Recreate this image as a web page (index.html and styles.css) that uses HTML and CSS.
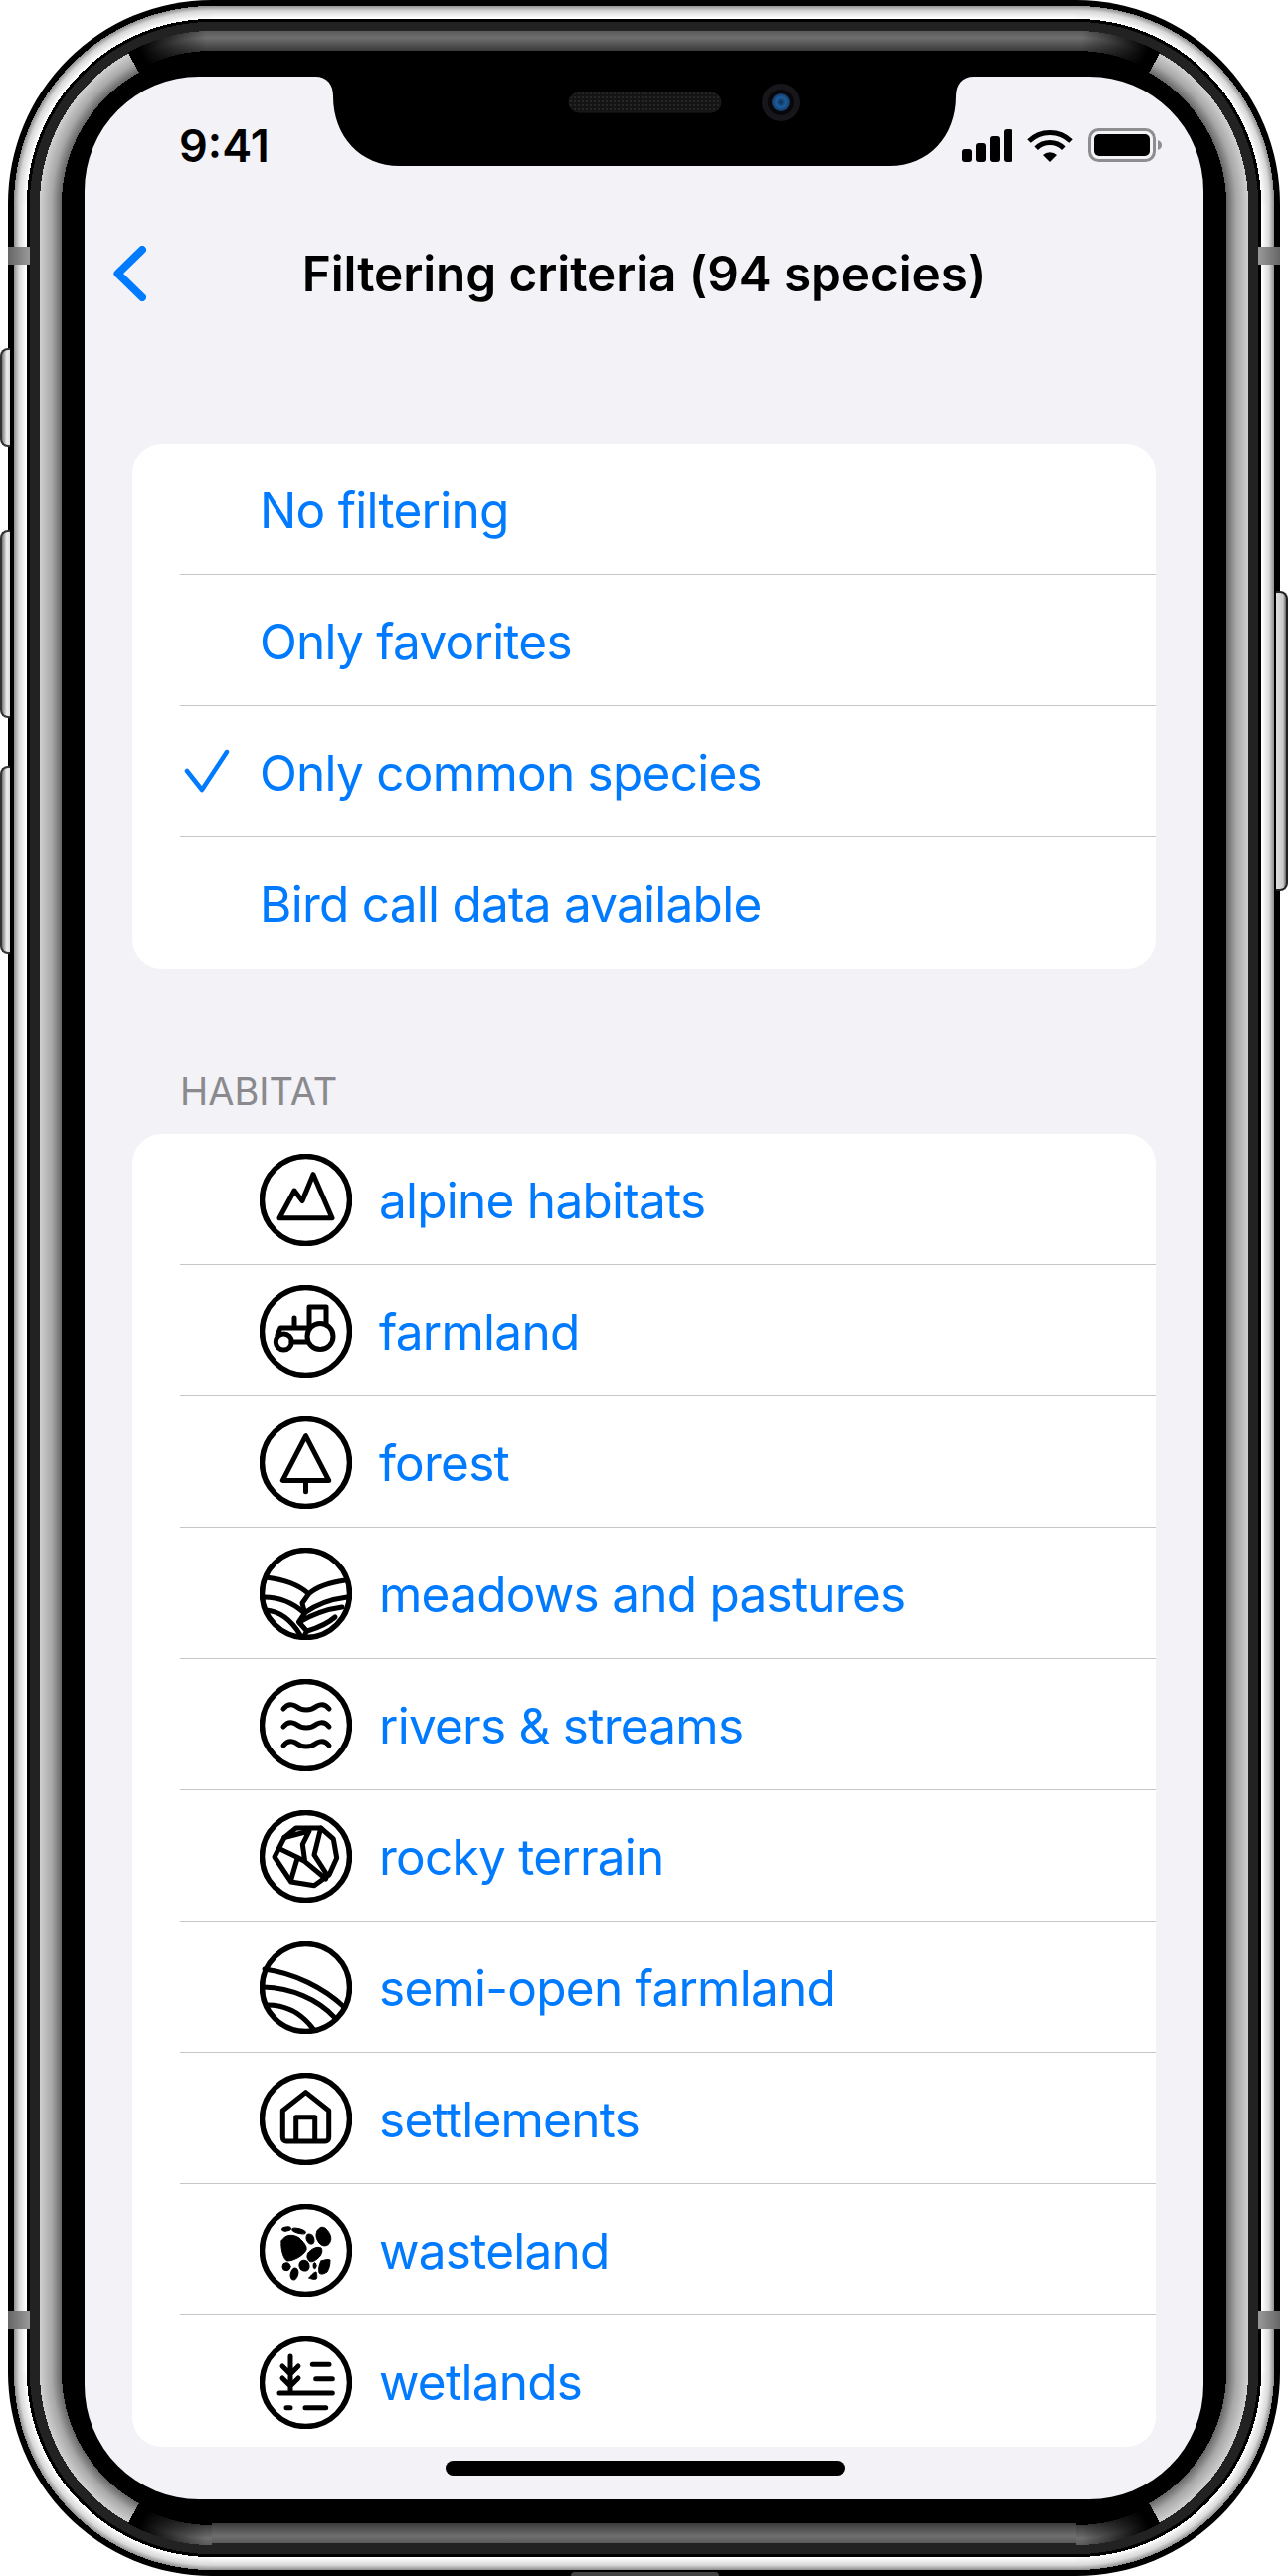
FILE: index.html
```html
<!DOCTYPE html>
<html lang="en">
<head>
    <meta charset="UTF-8">
    <title>Filtering criteria</title>
    <link rel="stylesheet" href="styles.css">
</head>
<body>
    <div class="device">
        <span class="side-btn silent"></span>
        <span class="side-btn vol-up"></span>
        <span class="side-btn vol-down"></span>
        <span class="side-btn power"></span>
        <span class="bottom-btn"></span>

        <div class="phone">
            <div class="screen">
                <svg class="notch" width="662" height="90" viewBox="0 0 662 90">
                    <defs>
                        <pattern id="mesh" width="4" height="4" patternUnits="userSpaceOnUse">
                            <rect width="4" height="4" fill="#141414"/>
                            <rect width="2" height="2" fill="#262626"/>
                        </pattern>
                        <radialGradient id="lens">
                            <stop offset="0" stop-color="#0d2c52"/>
                            <stop offset="0.55" stop-color="#1d5d9b"/>
                            <stop offset="1" stop-color="#123a66"/>
                        </radialGradient>
                    </defs>
                    <path d="M0 0C12 0 18 8 18 20C18 60 45 90 85 90H577C617 90 644 60 644 20C644 8 650 0 662 0Z" fill="#000"/>
                    <rect x="255" y="16" width="153" height="20" rx="10" fill="url(#mesh)" stroke="#1c1c1c"/>
                    <circle cx="468" cy="26" r="19" fill="#17171b"/>
                    <circle cx="468" cy="26" r="13" fill="#08080c"/>
                    <circle cx="468" cy="26" r="9" fill="url(#lens)"/>
                </svg>

                <div class="status">
                    <span class="time">9:41</span>
                    <div class="status-icons">
                        <svg width="51" height="33" viewBox="0 0 51 33" fill="#000">
                            <rect x="0" y="20" width="10" height="13" rx="3"/>
                            <rect x="14" y="14" width="10" height="19" rx="3"/>
                            <rect x="28" y="7" width="10" height="26" rx="3"/>
                            <rect x="42" y="0" width="9" height="33" rx="3"/>
                        </svg>
                        <svg width="46" height="33" viewBox="0 0 46 33">
                            <path d="M2 12A30 30 0 0 1 44 12M9.200 19.200A19.500 19.500 0 0 1 36.800 19.200" fill="none" stroke="#000" stroke-width="5"/>
                            <path d="M23 33L16 26A10 10 0 0 1 30 26Z" fill="#000"/>
                        </svg>
                        <svg width="74" height="34" viewBox="0 0 74 34">
                            <rect x="1.500" y="1.500" width="65" height="31" rx="9" fill="none" stroke="#8e8e90" stroke-width="3"/>
                            <rect x="6" y="6" width="56" height="22" rx="5" fill="#000"/>
                            <path d="M70 12C73 13 74 15 74 17C74 19 73 21 70 22Z" fill="#8e8e90"/>
                        </svg>
                    </div>
                </div>

                <div class="nav">
                    <svg class="back" width="33" height="56" viewBox="0 0 33 56">
                        <path d="M29 4L4.500 28L29 52" fill="none" stroke="#007aff" stroke-width="8" stroke-linecap="round" stroke-linejoin="round"/>
                    </svg>
                    <h1>Filtering criteria (94 species)</h1>
                </div>

                <ul class="card first">
                    <li class="row"><span class="slot"></span>No filtering</li>
                    <li class="row"><span class="slot"></span>Only favorites</li>
                    <li class="row">
                        <span class="slot">
                            <svg class="check" width="47" height="47" viewBox="0 0 47 47">
                                <path d="M3 22L18 41L43 3" fill="none" stroke="#007aff" stroke-width="4.500" stroke-linecap="round" stroke-linejoin="round"/>
                            </svg>
                        </span>
                        Only common species
                    </li>
                    <li class="row"><span class="slot"></span>Bird call data available</li>
                </ul>

                <h2 class="section-label">HABITAT</h2>

                <ul class="card">
                    <li class="row">
                        <svg class="habitat" viewBox="0 0 93 93">
                            <circle class="ring" cx="46.500" cy="46.500" r="44"/>
                            <path d="M20 64.700L35 37L43 47.500L54 20.700L73 64.700Z"/>
                        </svg>
                        alpine habitats
                    </li>
                    <li class="row">
                        <svg class="habitat" viewBox="0 0 93 93">
                            <circle class="ring" cx="46.500" cy="46.500" r="44"/>
                            <path d="M50 40V22H67V40"/>
                            <circle cx="61" cy="51.500" r="13"/>
                            <circle cx="24.300" cy="57" r="8"/>
                            <path d="M18 50L21 43H50M35 33V43M32 57H48"/>
                        </svg>
                        farmland
                    </li>
                    <li class="row">
                        <svg class="habitat" viewBox="0 0 93 93">
                            <circle class="ring" cx="46.500" cy="46.500" r="44"/>
                            <path d="M46.500 19.600L23.300 64.400H69.700ZM46.500 64.400V75.800"/>
                        </svg>
                        forest
                    </li>
                    <li class="row">
                        <svg class="habitat" viewBox="0 0 93 93">
                            <circle class="ring" cx="46.500" cy="46.500" r="44"/>
                            <path d="M6 30C24 32 40 38 49.500 46.700C58 39 72 35 86 33"/>
                            <path d="M4.500 50C20 50 34 56 45 66C56 58 72 52 88 50"/>
                            <path d="M6 63C20 64 32 73 41 88"/>
                            <path d="M40 75C52 68 68 62 83 60"/>
                            <path d="M48 84C58 81 68 77 76 70"/>
                            <path d="M49.500 46.700L43 56L45.500 66L39.500 75L47.500 84L44 91"/>
                        </svg>
                        meadows and pastures
                    </li>
                    <li class="row">
                        <svg class="habitat" viewBox="0 0 93 93">
                            <circle class="ring" cx="46.500" cy="46.500" r="44"/>
                            <path d="M24 30C28 25 32 25 36 27C40 30 43 31 47 31C51 31 54 30 58 27C62 25 66 25 70 30"/>
                            <path d="M24 48C28 43 32 43 36 45C40 48 43 49 47 49C51 49 54 48 58 45C62 43 66 43 70 48"/>
                            <path d="M24 67C28 62 32 62 36 64C40 67 43 68 47 68C51 68 54 67 58 64C62 62 66 62 70 67"/>
                        </svg>
                        rivers &amp; streams
                    </li>
                    <li class="row">
                        <svg class="habitat" viewBox="0 0 93 93">
                            <circle class="ring" cx="46.500" cy="46.500" r="44"/>
                            <path d="M15 47L25 27.500L36.700 18H61.700L74.300 29L77.700 48L70 65L55 75.700L31.700 72Z"/>
                            <path d="M25 27.500L50 21L43.300 34.400L45.700 51.600L66.700 69M61.700 18L55 44.800L68 65M21.700 39.600L38.300 47.500L31.700 70M38.300 47.500L45.700 51.600"/>
                        </svg>
                        rocky terrain
                    </li>
                    <li class="row">
                        <svg class="habitat" viewBox="0 0 93 93">
                            <circle class="ring" cx="46.500" cy="46.500" r="44"/>
                            <path d="M5 28C35 32 65 47 85 66M4 46C32 47 58 58 75 76M8 64C26 64 42 72 54 88"/>
                        </svg>
                        semi-open farmland
                    </li>
                    <li class="row">
                        <svg class="habitat" viewBox="0 0 93 93">
                            <circle class="ring" cx="46.500" cy="46.500" r="44"/>
                            <path d="M46.500 19.600L23.300 38V65C23.300 67.500 25 69 27 69H66C68 69 69.700 67.500 69.700 65V38ZM36.700 69V44.800H55.700V69"/>
                        </svg>
                        settlements
                    </li>
                    <li class="row">
                        <svg class="habitat" viewBox="0 0 93 93">
                            <circle class="ring" cx="46.500" cy="46.500" r="44"/>
                            <g class="solid">
                                <path d="M22 37C26 30 34 30 40 34C44 38 48 42 47 46C44 52 34 57 28 57C24 56 21 44 22 37Z"/>
                                <path d="M58 27C60 23 64 22 67 25C71 29 73 34 71 38C69 43 63 43 60 39C57 35 56 31 58 27Z"/>
                                <path d="M49 49C52 45 58 42 62 44C64 47 62 52 59 54C56 57 52 59 50 57C48 55 47 52 49 49Z"/>
                                <path d="M62 57C65 56 69 55 71 56C71 61 70 65 68 68C65 70 62 71 60 69C59 65 60 60 62 57Z"/>
                                <path d="M50 74C52 71 55 68 57 68C58 71 58 75 57 75C55 76 52 75 50 74Z"/>
                                <ellipse cx="45" cy="61.700" rx="5" ry="5.500" transform="rotate(-30 45 61.700)"/>
                                <circle cx="27" cy="62.700" r="4"/>
                                <ellipse cx="35" cy="70" rx="3.700" ry="6" transform="rotate(15 35 70)"/>
                                <ellipse cx="55.500" cy="61.700" rx="1.500" ry="3"/>
                                <ellipse cx="27" cy="25" rx="4.500" ry="2" transform="rotate(-10 27 25)"/>
                                <ellipse cx="39.500" cy="27" rx="7" ry="2.300" transform="rotate(15 39.500 27)"/>
                                <ellipse cx="51" cy="35" rx="3.700" ry="5.300" transform="rotate(-25 51 35)"/>
                            </g>
                        </svg>
                        wasteland
                    </li>
                    <li class="row">
                        <svg class="habitat" viewBox="0 0 93 93">
                            <circle class="ring" cx="46.500" cy="46.500" r="44"/>
                            <path d="M20 57H73.300M31 20V57M23 30L31 38L39 30M23 42L31 50L39 42M53.300 28.300H70M56.700 42.700H73.300M27 71.700H31M46 71.700H66.700"/>
                        </svg>
                        wetlands
                    </li>
                </ul>

                <div class="home-bar"></div>
            </div>
        </div>

        <span class="corner tl"></span>
        <span class="corner tr"></span>
        <span class="corner bl"></span>
        <span class="corner br"></span>
        <span class="antenna left top"></span>
        <span class="antenna right top"></span>
        <span class="antenna left bottom"></span>
        <span class="antenna right bottom"></span>
    </div>
</body>
</html>
```

FILE: styles.css
```css
/* Reset */
* {
    margin: 0;
    padding: 0;
    box-sizing: border-box;
}

body {
    background: white;
    font-family: 'Inter', 'Liberation Sans', sans-serif;
}

/* Device frame */
.device {
    position: relative;
    width: 1295px;
    height: 2590px;
    padding: 0 8px;
}

.phone {
    width: 1279px;
    height: 2590px;
    padding: 77px;
    border-radius: 205px;
    background:
        radial-gradient(circle 205px at 100% 100%, #000 151px, #666 151px, #a8a8a8 161px, #d0d0d0 173px, #222 173px, #222 183px, #000 183px, #000 186px, #fff 186px, #d8d8d8 194px, #8f8f8f 199px, #000 199px) left top / 205px 205px no-repeat,
        radial-gradient(circle 205px at 0 100%, #000 151px, #666 151px, #a8a8a8 161px, #d0d0d0 173px, #222 173px, #222 183px, #000 183px, #000 186px, #fff 186px, #d8d8d8 194px, #8f8f8f 199px, #000 199px) right top / 205px 205px no-repeat,
        radial-gradient(circle 205px at 100% 0, #000 151px, #666 151px, #a8a8a8 161px, #d0d0d0 173px, #222 173px, #222 183px, #000 183px, #000 186px, #fff 186px, #d8d8d8 194px, #8f8f8f 199px, #000 199px) left bottom / 205px 205px no-repeat,
        radial-gradient(circle 205px at 0 0, #000 151px, #666 151px, #a8a8a8 161px, #d0d0d0 173px, #222 173px, #222 183px, #000 183px, #000 186px, #fff 186px, #d8d8d8 194px, #8f8f8f 199px, #000 199px) right bottom / 205px 205px no-repeat,
        linear-gradient(to right, #000 6px, #8f8f8f 6px, #d8d8d8 11px, #fff 18px, #fff 19px, #000 19px, #000 22px, #222 22px, #222 32px, #d0d0d0 32px, #a8a8a8 44px, #666 54px, #000 54px) left center / 205px 2180px no-repeat,
        linear-gradient(to left, #000 6px, #8f8f8f 6px, #d8d8d8 11px, #fff 18px, #fff 19px, #000 19px, #000 22px, #222 22px, #222 32px, #d0d0d0 32px, #a8a8a8 44px, #666 54px, #000 54px) right center / 205px 2180px no-repeat,
        linear-gradient(to bottom, #000 6px, #8f8f8f 6px, #d8d8d8 11px, #fff 18px, #fff 19px, #000 19px, #000 22px, #222 22px, #222 31px, #5a5a5a 31px, #6e6e6e 38px, #3a3a3a 51px, #000 51px) center top / 869px 205px no-repeat,
        linear-gradient(to top, #000 6px, #8f8f8f 6px, #d8d8d8 11px, #fff 18px, #fff 19px, #000 19px, #000 22px, #222 22px, #222 33px, #5a5a5a 33px, #6e6e6e 40px, #3a3a3a 53px, #000 53px) center bottom / 869px 205px no-repeat,
        #000;
}

/* The bevel changes from the light side strip to the dark top strip around each corner */
.corner {
    position: absolute;
    width: 205px;
    height: 205px;
    background: radial-gradient(circle 205px at 100% 100%, transparent 150px, #000 150px, #000 174px, transparent 174px);
    -webkit-mask-image: conic-gradient(at 100% 100%, transparent 331deg, #000 331deg);
    mask-image: conic-gradient(at 100% 100%, transparent 331deg, #000 331deg);
}

.corner::after {
    content: "";
    position: absolute;
    inset: 0;
    background: radial-gradient(circle 205px at 100% 100%, transparent 154px, #3a3a3a 154px, #6e6e6e 167px, #5a5a5a 174px, transparent 174px);
    -webkit-mask-image: conic-gradient(at 100% 100%, transparent 335deg, #000 358deg);
    mask-image: conic-gradient(at 100% 100%, transparent 335deg, #000 358deg);
}

.corner.tl { left: 8px; top: 0; }
.corner.tr { right: 8px; top: 0; transform: scaleX(-1); }
.corner.bl { left: 8px; bottom: 0; transform: scaleY(-1); }
.corner.br { right: 8px; bottom: 0; transform: scale(-1, -1); }

.side-btn {
    position: absolute;
    background: linear-gradient(to right, #777, #eee 60%, #ddd);
    border: 2px solid #333;
    border-right: none;
}

.silent, .vol-up, .vol-down {
    left: 0;
    width: 10px;
    border-radius: 8px 0 0 8px;
}

.silent { top: 350px; height: 99px; }
.vol-up { top: 533px; height: 189px; }
.vol-down { top: 770px; height: 189px; }

.power {
    right: 0;
    top: 594px;
    width: 12px;
    height: 302px;
    border: 2px solid #222;
    border-left: none;
    border-radius: 0 8px 8px 0;
    background: linear-gradient(to right, #ddd, #ccc 70%, #666);
}

.bottom-btn {
    position: absolute;
    left: 574px;
    bottom: 0;
    width: 149px;
    height: 4px;
    background: #444;
    border-radius: 6px 6px 0 0;
}

.antenna {
    position: absolute;
    width: 22px;
    height: 18px;
}

.antenna.left { left: 8px; background: linear-gradient(to right, #666, #999); }
.antenna.right { right: 8px; background: linear-gradient(to left, #666, #999); }
.antenna.top { top: 248px; }
.antenna.bottom { top: 2324px; }

/* Screen */
.screen {
    position: relative;
    height: 100%;
    background: #f2f2f7;
    border-radius: 115px;
    overflow: hidden;
}

.notch {
    position: absolute;
    left: 232px;
    top: 0;
}

.status {
    display: flex;
    justify-content: space-between;
    align-items: center;
    height: 132px;
    padding: 6px 42px 0 95px;
}

.time {
    font-size: 45px;
    font-weight: 600;
    color: #000;
}

.status-icons {
    display: flex;
    align-items: center;
    gap: 15px;
}

.nav {
    position: relative;
    height: 132px;
    display: flex;
    align-items: center;
    justify-content: center;
}

.back {
    position: absolute;
    left: 29px;
    top: 38px;
}

h1 {
    font-size: 49.5px;
    font-weight: 600;
    letter-spacing: -0.1px;
    color: #000;
}

/* Lists */
.card {
    list-style: none;
    margin: 0 48px;
    background: white;
    border-radius: 30px;
}

.card.first {
    margin-top: 105px;
}

.row {
    display: flex;
    align-items: center;
    height: 132px;
    margin-left: 48px;
    padding-top: 2px;
    border-bottom: 1px solid #c6c6c8;
    font-size: 49.5px;
    letter-spacing: -0.75px;
    color: #007aff;
}

.row:last-child {
    border-bottom: none;
}

.slot {
    display: flex;
    flex: none;
    width: 80px;
}

.check {
    margin-left: 4px;
}

.section-label {
    height: 166px;
    padding: 100px 0 0 96px;
    font-size: 38px;
    font-weight: 400;
    line-height: 46px;
    color: #8a8a8e;
}

.habitat {
    flex: none;
    width: 93px;
    height: 93px;
    margin: 0 27px 0 80px;
    fill: none;
    stroke: #000;
    stroke-width: 5;
    stroke-linecap: round;
    stroke-linejoin: round;
}

.habitat .ring {
    stroke-width: 5.5;
}

.habitat .solid {
    fill: #000;
    stroke: #000;
    stroke-width: 1;
}

.home-bar {
    width: 402px;
    height: 15px;
    margin: 14px auto 0;
    border-radius: 8px;
    background: #000;
    transform: translateX(1px);
}
```
